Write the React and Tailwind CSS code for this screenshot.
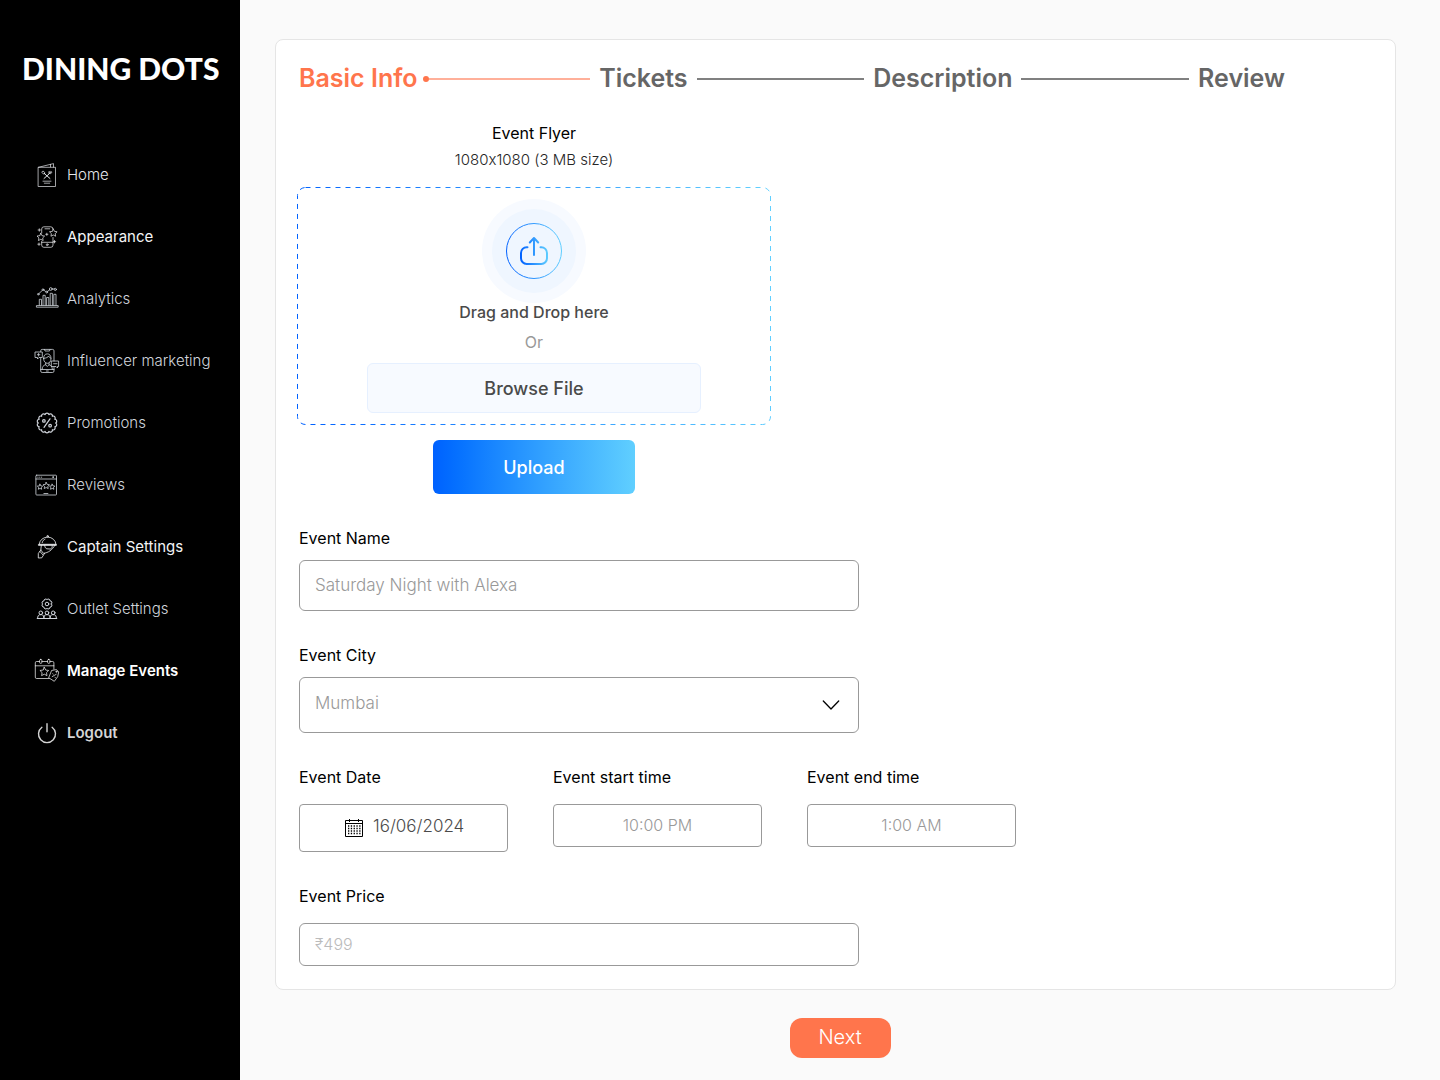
import React from "react";

const star = (cx, cy, r) =>
  Array.from({ length: 10 }, (_, i) => {
    const a = (Math.PI / 5) * i - Math.PI / 2;
    const d = i % 2 ? r * 0.5 : r;
    return `${(cx + d * Math.cos(a)).toFixed(2)},${(cy + d * Math.sin(a)).toFixed(2)}`;
  }).join(" ");

const ring = (cx, cy, r, bumps, bumpR) => {
  const pts = Array.from({ length: bumps }, (_, i) => {
    const a = ((Math.PI * 2) / bumps) * i;
    return `${(cx + r * Math.cos(a)).toFixed(2)} ${(cy + r * Math.sin(a)).toFixed(2)}`;
  });
  return `M${pts[0]}` + pts.slice(1).concat(pts[0]).map((p) => `A${bumpR} ${bumpR} 0 0 1 ${p}`).join("") + "Z";
};

function NavIcon({ children, width = 0.8 }) {
  return (
    <svg
      viewBox="0 0 24 24"
      className="size-6 shrink-0 overflow-visible"
      fill="none"
      stroke="currentColor"
      strokeWidth={width}
      strokeLinecap="round"
      strokeLinejoin="round"
      aria-hidden="true"
    >
      {children}
    </svg>
  );
}

const HomeIcon = () => (
  <NavIcon width={0.7}>
    <path d="M3.5 4.3h17v19.2h-17zM3.5 4.3 18.5.6v3.5M15.5 1.4v2.4" />
    <path d="m9.4 10.6 5.6 4.9M14.4 10.6 9 15.5" strokeWidth="1" />
    <ellipse cx="8.4" cy="9.6" rx="1.6" ry="1.1" transform="rotate(42 8.4 9.6)" />
    <path d="m14 8.6-.2 1.8 2 .3 1-1.4M15 8.3l-.3 1.4M16.3 8.4l-1 1.3" />
    <path d="M8 18.2h8M9.3 20.2h5.4" />
  </NavIcon>
);

const AppearanceIcon = () => (
  <NavIcon width={0.7}>
    <path d="M6.7 8V4a2.2 2.2 0 0 1 2.2-2.2h6.9A2.2 2.2 0 0 1 18 4M6.700 16.500v3.600a2.200 2.200 0 0 0 2.200 2.200h6.900a2.200 2.200 0 0 0 2.200-2.200V12.500M6.700 17.300H18M10 3.800h4.700" />
    <polygon points={star(5.8, 12.3, 4)} />
    <polygon points={star(18.3, 8, 4)} />
    <path d="M4.300 3.800v2.400M3.100 5h2.400M4 18v2.400M2.800 19.200h2.400M19.500 15.500v2.400M18.300 16.700h2.400M11.800 8.200v2.200M10.700 9.300h2.200" />
    <circle cx="12.2" cy="19.7" r="0.9" />
  </NavIcon>
);

const AnalyticsIcon = () => (
  <NavIcon>
    <path d="M4.300 18.300v-6h2.200v6M8 18.300V8.300h2.200v10M11.600 18.300v-7.800h2.200v7.800M15.200 18.300V6.300h2.200v12M18.800 18.300V7.300H21v11" />
    <path d="M1.800 18.600h21.400v1.600H1.800z" />
    <path d="M3.900 6.600 7.300 3.400M8.700 3.100l2.300 1.600M12.300 4.500l2.400-1.700M17 2h2.300" />
    <circle cx="3.3" cy="7.2" r="0.8" />
    <circle cx="8" cy="2.7" r="0.9" />
    <circle cx="11.7" cy="5.1" r="0.9" />
    <circle cx="15.8" cy="2" r="1.4" />
    <circle cx="20.3" cy="2.4" r="1.1" />
  </NavIcon>
);

const InfluencerIcon = () => (
  <NavIcon>
    <path d="M5.700 2.500V1.800A1.500 1.500 0 0 1 7.200.4h10.300A1.500 1.500 0 0 1 19 1.800V12M5.700 9.500V22a1.500 1.500 0 0 0 1.500 1.500h10.300A1.500 1.500 0 0 0 19 22v-3.500M5.700 20.500H19M9.500.5l.5 1.500h4.500l.5-1.500M11.300 22h2" />
    <path d="M.4 3h6.900v5.500H4L2.500 10V8.500H.4zM16.700 12h6.900v5.500h-1.100V19L21 17.500h-4.300z" />
    <path d="M3.600 4.500v2.500M2.400 5.700h2.500M18.600 14.700H22" />
    <path d="M8.600 9.500c0-3 1.400-4.600 3.700-4.600S16 6.500 16 9.500s-1.600 4.800-3.700 4.800-3.700-1.800-3.700-4.800ZM8.700 9.300c2.300 0 4.300-1 5-2.300.5 1.200 1.200 2 2.200 2.300M10.700 14v1.800c-2.400.4-3.500 1.800-3.500 4.500M14 14v1.800c1.800.3 3.200 1.800 3.400 4.500M10.700 15.800l1.600 1.700 1.700-1.700" />
  </NavIcon>
);

const PromotionsIcon = () => (
  <NavIcon width={1.2}>
    <path d={ring(12, 12, 8.6, 14, 1.95)} />
    <circle cx="8.9" cy="9.9" r="1.3" />
    <circle cx="15.1" cy="14.7" r="1.3" />
    <path d="M15 7.800 9 16.300" />
  </NavIcon>
);

const ReviewsIcon = () => (
  <NavIcon>
    <rect x="0.9" y="2.2" width="20.6" height="19.8" rx="0.8" />
    <path d="M.9 6h20.600M2.800 4.200h.3M4.600 4.200h.3M6.400 4.200h.3M8.900 20.500h4" />
    <circle cx="18" cy="4.1" r="0.5" />
    <polygon points={star(5, 14, 2.8)} />
    <polygon points={star(11.2, 12.8, 3.4)} />
    <polygon points={star(17.2, 14, 2.8)} />
  </NavIcon>
);

const CaptainIcon = () => (
  <NavIcon>
    <path d="M4.300 9.300a8.300 7.200 0 0 1 16.600 0zM3.800 9.300h17.600v1.100H3.800zM7.200 7.600c.4-1.700 1.400-2.900 2.800-3.500" />
    <circle cx="12.6" cy="1.3" r="0.8" />
    <path d="M6.300 10.500 5.800 15l2.600 3.300c4.800-.4 9-3.500 11.300-7.800M9.700 10.600c.2 2 1 3 2.300 3.200l3.300.2c1.500-.3 2-1.700 1.900-3.300M5.800 15l-2.500 3.500V23l3.500-.2 2.800-4.500M4.900 16.400l3 3.400" />
  </NavIcon>
);

const OutletIcon = () => (
  <NavIcon width={1}>
    <path d={ring(12, 7, 4.3, 8, 1.7)} />
    <circle cx="12" cy="7" r="1.8" />
    {[5.8, 12, 18.2].map((x) => (
      <g key={x}>
        <circle cx={x} cy="15.8" r="1.8" />
        <path d={`M${x - 3.2} 21.400c0-2.300 1-3.700 2.200-3.700h2c1.200 0 2.200 1.400 2.200 3.700`} />
      </g>
    ))}
    <path d="M2.200 21.500h19.600" />
  </NavIcon>
);

const EventsIcon = () => (
  <NavIcon width={0.7}>
    <path d="M4.500 2.500H1.600A1.300 1.300 0 0 0 .3 3.800v14.400a1.300 1.300 0 0 0 1.300 1.300h12.600M7 2.500h5.500M15 2.500h2.600a1.300 1.300 0 0 1 1.300 1.300v6.400M.3 6.800h18.600" />
    <rect x="4.6" y="0.4" width="2.3" height="4" rx="1.1" />
    <rect x="12.6" y="0.4" width="2.3" height="4" rx="1.1" />
    <polygon points={star(9.3, 12.9, 4.6)} />
    <path d="m17 11.400 4.500-.8 2.200 2.400-1 4.700-3.400 4.600-5.300-3.400z" />
    <circle cx="21.4" cy="12.7" r="0.6" />
    <path d="m17.200 17.600 4-2.300M17.800 14.700l.3.400M20 18.200l.3.400" />
  </NavIcon>
);

const LogoutIcon = () => (
  <NavIcon width={1.4}>
    <path d="M12 2.700v8.100M6.900 6.300a8.500 8.500 0 1 0 10.200 0" />
  </NavIcon>
);

const navItems = [
  { label: "Home", Icon: HomeIcon, tone: "font-light text-gray-200" },
  { label: "Appearance", Icon: AppearanceIcon, tone: "font-normal text-gray-100" },
  { label: "Analytics", Icon: AnalyticsIcon, tone: "font-light text-gray-300" },
  { label: "Influencer marketing", Icon: InfluencerIcon, tone: "font-light text-gray-300" },
  { label: "Promotions", Icon: PromotionsIcon, tone: "font-light text-gray-300" },
  { label: "Reviews", Icon: ReviewsIcon, tone: "font-light text-gray-300" },
  { label: "Captain Settings", Icon: CaptainIcon, tone: "font-normal text-gray-100" },
  { label: "Outlet Settings", Icon: OutletIcon, tone: "font-light text-gray-300" },
  { label: "Manage Events", Icon: EventsIcon, tone: "font-semibold text-white", current: true },
  { label: "Logout", Icon: LogoutIcon, tone: "font-semibold text-neutral-300" },
];

function Sidebar() {
  return (
    <aside className="w-60 shrink-0 bg-black pt-[52px]">
      <div className="pl-[22px] font-['Lato',sans-serif] text-[30px] leading-8 font-black whitespace-nowrap text-white">
        DINING DOTS
      </div>
      <nav className="mt-[79px] flex flex-col gap-[38px] pl-[35px]">
        {navItems.map(({ label, Icon, tone, current }) => (
          <a
            key={label}
            href="#"
            aria-current={current ? "page" : undefined}
            className={`flex h-6 items-center gap-2 text-[15px] whitespace-nowrap ${tone}`}
          >
            <Icon />
            {label}
          </a>
        ))}
      </nav>
    </aside>
  );
}

function Stepper() {
  return (
    <ol className="flex h-10 max-w-[990px] items-center gap-[9px] px-0.5 text-[25px] font-semibold text-[#666666]">
      <li className="text-[#ff754c]">Basic Info</li>
      <li aria-hidden="true" className="-ml-1 flex flex-1 items-center">
        <span className="size-1.5 rounded-full bg-[#ff754c]" />
        <span className="h-0.5 flex-1 bg-[#ffb09a]" />
      </li>
      <li>Tickets</li>
      <li aria-hidden="true" className="h-0.5 flex-1 bg-[#808080]" />
      <li>Description</li>
      <li aria-hidden="true" className="h-0.5 flex-1 bg-[#808080]" />
      <li>Review</li>
    </ol>
  );
}

function UploadBadge() {
  return (
    <svg viewBox="0 0 104 104" className="size-[104px]" fill="none" aria-hidden="true">
      <defs>
        <linearGradient id="badge" gradientUnits="userSpaceOnUse" x1="24" y1="52" x2="80" y2="48">
          <stop stopColor="#0061ff" />
          <stop offset="1" stopColor="#60cfff" />
        </linearGradient>
        <linearGradient id="tray" gradientUnits="userSpaceOnUse" x1="38" y1="52" x2="66" y2="50">
          <stop stopColor="#0061ff" />
          <stop offset="1" stopColor="#60cfff" />
        </linearGradient>
      </defs>
      <circle cx="52" cy="52" r="52" fill="#f7faff" />
      <circle cx="52" cy="52" r="42" fill="#eff6ff" />
      <circle cx="52" cy="52" r="27.5" stroke="url(#badge)" />
      <g stroke="url(#tray)" strokeWidth="2" strokeLinecap="round" strokeLinejoin="round">
        <path d="M45.500 48.200h-.8a5.700 5.700 0 0 0-5.700 5.700v5.400a5.700 5.700 0 0 0 5.700 5.700h14.600a5.700 5.700 0 0 0 5.700-5.700v-5.400a5.700 5.700 0 0 0-5.700-5.700h-.8" />
        <path d="M52 56V39.500M47.800 43.500 52 39l4.200 4.500" />
      </g>
    </svg>
  );
}

function FlyerUpload() {
  return (
    <section className="mt-[22px] flex w-full max-w-[474px] flex-col items-center">
      <h2 className="text-base leading-6 text-black">Event Flyer</h2>
      <p className="mt-[3px] text-[15px] leading-6 font-light text-neutral-800 [font-feature-settings:'calt'_0]">
        1080x1080 (3 MB size)
      </p>
      <div className="relative mt-[15px] flex w-full flex-col items-center py-3">
        <svg className="pointer-events-none absolute inset-0 size-full overflow-visible" fill="none" aria-hidden="true">
          <defs>
            <linearGradient id="edge" x1="0" y1="0.5" x2="1" y2="0.45">
              <stop stopColor="#0061ff" />
              <stop offset="1" stopColor="#60cfff" />
            </linearGradient>
          </defs>
          <rect
            x="0.5"
            y="0.5"
            rx="8"
            className="h-[calc(100%-1px)] w-[calc(100%-1px)]"
            stroke="url(#edge)"
            strokeDasharray="5 5"
          />
        </svg>
        <UploadBadge />
        <p className="text-base leading-[18px] font-medium text-[#4a4a4a]">Drag and Drop here</p>
        <p className="mt-3 text-base leading-[18px] text-[#999999]">Or</p>
        <button
          type="button"
          className="mt-3 h-[50px] w-[334px] rounded-md border border-[#e6f0ff] bg-[#f7faff] pt-0.5 text-lg font-medium text-[#4a4a4a]"
        >
          Browse File
        </button>
      </div>
      <button
        type="button"
        className="mt-[15px] h-[54px] w-[202px] rounded-md bg-linear-to-r from-[#0061ff] to-[#60cfff] pt-0.5 text-lg font-medium text-white"
      >
        Upload
      </button>
    </section>
  );
}

function CalendarIcon() {
  return (
    <svg viewBox="0 0 18 18" className="size-[18px] shrink-0" fill="none" stroke="#000" aria-hidden="true">
      <path d="M.5 1.500h17v16H.5zM.5 4.500h17M4.500 0v3M13.500 0v3" />
      {[7, 9.5, 12, 14.5].map((y) => (
        <path key={y} d={`M3 ${y}h12.500`} strokeWidth="1.300" strokeDasharray="1.300 1.500" />
      ))}
    </svg>
  );
}

const labelClass = "block text-base leading-6 text-black";
const fieldClass =
  "block w-full border border-[#999999] bg-white px-[15px] pb-0.5 font-light text-[#4a4a4a] outline-none";

function EventForm() {
  return (
    <form id="event-form" className="mt-8 flex flex-col gap-8 px-0.5" onSubmit={(e) => e.preventDefault()}>
      <div className="max-w-[560px]">
        <label htmlFor="name" className={labelClass}>Event Name</label>
        <input
          id="name"
          type="text"
          placeholder="Saturday Night with Alexa"
          className={`${fieldClass} mt-2.5 h-[51px] rounded-md text-[17px] placeholder:text-[#999999]`}
        />
      </div>
      <div className="max-w-[560px]">
        <label htmlFor="city" className={labelClass}>Event City</label>
        <div className="relative mt-2.5">
          <select
            id="city"
            defaultValue="Mumbai"
            className={`${fieldClass} h-14 appearance-none rounded-md text-[17px] !text-[#999999]`}
          >
            <option>Mumbai</option>
          </select>
          <svg
            viewBox="0 0 18 10"
            className="pointer-events-none absolute top-1/2 right-[19px] h-2.5 w-[18px] -translate-y-1/2"
            fill="none"
            stroke="#000"
            strokeWidth="1.3"
            strokeLinecap="round"
            strokeLinejoin="round"
            aria-hidden="true"
          >
            <path d="m1.300 1 7.700 8 7.700-8" />
          </svg>
        </div>
      </div>
      <div className="grid max-w-[717px] grid-cols-3 items-start gap-[45px]">
        <div>
          <label htmlFor="date" className={labelClass}>Event Date</label>
          <div className="mt-[15px] flex h-12 items-center gap-2.5 rounded-[4px] border border-[#999999] bg-white pl-[45px]">
            <CalendarIcon />
            <input
              id="date"
              type="text"
              defaultValue="16/06/2024"
              className="w-full min-w-0 pb-0.5 text-[17px] font-light text-[#4a4a4a] outline-none"
            />
          </div>
        </div>
        <div>
          <label htmlFor="start" className={labelClass}>Event start time</label>
          <input
            id="start"
            type="text"
            placeholder="10:00 PM"
            className={`${fieldClass} mt-[15px] h-[43px] rounded-[4px] text-center text-base placeholder:text-[#999999]`}
          />
        </div>
        <div>
          <label htmlFor="end" className={labelClass}>Event end time</label>
          <input
            id="end"
            type="text"
            placeholder="1:00 AM"
            className={`${fieldClass} mt-[15px] h-[43px] rounded-[4px] text-center text-base placeholder:text-[#999999]`}
          />
        </div>
      </div>
      <div className="max-w-[560px]">
        <label htmlFor="price" className={labelClass}>Event Price</label>
        <input
          id="price"
          type="text"
          placeholder="₹499"
          className={`${fieldClass} mt-[15px] h-[43px] rounded-md text-base placeholder:text-[#bbbbbb]`}
        />
      </div>
    </form>
  );
}

export default function App() {
  return (
    <div className="flex min-h-screen bg-[#fafafa] font-['Inter','Noto_Sans',sans-serif]">
      <Sidebar />
      <main className="flex min-w-0 flex-1 flex-col pt-[39px] pb-[22px]">
        <div className="mr-11 ml-[35px] rounded-lg border border-[#e5e5e5] bg-white px-[21px] pt-[19px] pb-[23px]">
          <Stepper />
          <FlyerUpload />
          <EventForm />
        </div>
        <button
          type="submit"
          form="event-form"
          className="mt-7 h-10 w-[101px] self-center rounded-xl bg-[#ff754c] pb-0.5 text-xl font-light text-white"
        >
          Next
        </button>
      </main>
    </div>
  );
}
